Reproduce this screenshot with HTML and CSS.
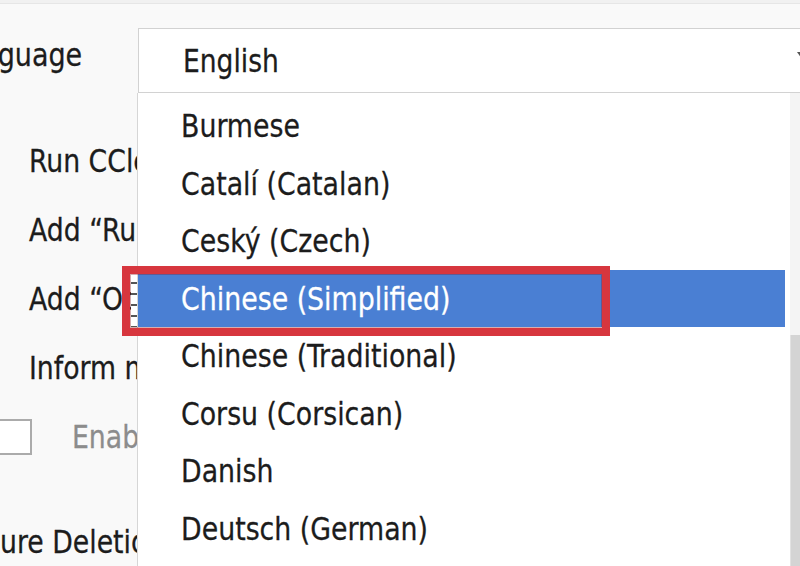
FILE: index.html
```html
<!DOCTYPE html>
<html lang="en">
<head>
<meta charset="utf-8">
<title>Settings - Language</title>
<link rel="stylesheet" href="styles.css">
</head>
<body>
<div class="dialog">
  <div class="topbar"></div>
  <div class="lang-row">
    <span class="lang-label"><span class="tx">Language</span></span>
    <div class="select">
      <span class="tx">English</span>
      <span class="arrow"></span>
    </div>
  </div>
  <div class="options">
    <div class="opt"><span class="tx">Run CCleaner when the computer starts</span></div>
    <div class="opt"><span class="tx">Add “Run CCleaner” option to Recycle Bin context menu</span></div>
    <div class="opt"><span class="tx">Add “Open CCleaner...” option to Recycle Bin context menu</span></div>
    <div class="opt"><span class="tx">Inform me of updates to CCleaner</span></div>
    <div class="opt check-row"><span class="checkbox"></span><span class="tx disabled">Enable automatic updates for CCleaner</span></div>
  </div>
  <div class="section"><span class="tx">Secure Deletion</span></div>

  <ul class="dropdown">
    <li><span class="tx">Burmese</span></li>
    <li><span class="tx">Catalí (Catalan)</span></li>
    <li><span class="tx">Ceský (Czech)</span></li>
    <li class="sel"><span class="tx">Chinese (Simplified)</span></li>
    <li><span class="tx">Chinese (Traditional)</span></li>
    <li><span class="tx">Corsu (Corsican)</span></li>
    <li><span class="tx">Danish</span></li>
    <li><span class="tx">Deutsch (German)</span></li>
  </ul>
  <div class="scrollbar"><div class="thumb"></div></div>
  <div class="callout"></div>
</div>
</body>
</html>
```
FILE: styles.css
```css
html, body {
  margin: 0;
  padding: 0;
  background: #f9f9f9;
}

.dialog {
  position: relative;
  width: 800px;
  height: 566px;
  overflow: hidden;
  white-space: nowrap;
  background: #f9f9f9;
  color: #1c1c1c;
  font-family: "DejaVu Sans Condensed", "DejaVu Sans", sans-serif;
  -webkit-text-stroke: 0.25px currentColor;
}

.tx {
  display: inline-block;
  transform: scaleY(1.09);
}

.topbar {
  height: 3px;
  background: #f1f1f1;
  border-bottom: 1px solid #e6e6e6;
}

.lang-row {
  display: flex;
  align-items: center;
  height: 65px;
  margin-top: 24px;
}

.lang-label {
  flex: none;
  width: 189px;
  margin-left: -51px;
  margin-bottom: 12px;
  font-size: 30px;
}

.select {
  position: relative;
  flex: none;
  box-sizing: border-box;
  width: 720px;
  height: 65px;
  display: flex;
  align-items: center;
  padding-left: 44px;
  background: #ffffff;
  border: 1px solid #d2d2d2;
  font-size: 29.5px;
}

.arrow {
  position: absolute;
  left: 658px;
  top: 23px;
  width: 0;
  height: 0;
  border-left: 5px solid transparent;
  border-right: 5px solid transparent;
  border-top: 7px solid #555;
}

.options {
  margin-top: 33px;
}

.opt {
  display: flex;
  align-items: center;
  height: 69px;
  padding-left: 29px;
  font-size: 29.7px;
}

.check-row {
  padding-left: 0;
  margin-left: -4px;
}

.checkbox {
  flex: none;
  box-sizing: border-box;
  width: 36px;
  height: 36px;
  background: #ffffff;
  border: 2px solid #ababab;
  margin-right: 40px;
}

.disabled {
  color: #8c8c8c;
}

.section {
  display: flex;
  align-items: center;
  height: 40px;
  margin-top: 50px;
  margin-left: -48px;
  font-size: 29.7px;
}

.dropdown {
  position: absolute;
  left: 137px;
  top: 93px;
  width: 653px;
  bottom: -20px;
  box-sizing: border-box;
  margin: 0;
  padding: 4px 0 0 0;
  list-style: none;
  background: #ffffff;
  border-left: 1px solid #d6d6d6;
}

.dropdown li {
  position: relative;
  height: 57.5px;
  display: flex;
  align-items: center;
  padding-left: 43px;
  font-size: 29.8px;
}

.dropdown li.sel {
  margin-right: 5px;
  background: #4a7fd3;
  color: #ffffff;
}

.dropdown li.sel::before {
  content: "";
  position: absolute;
  left: -7px;
  top: 3px;
  bottom: 0;
  width: 6px;
  background: repeating-linear-gradient(#ffffff 0 9px, #555555 9px 11px);
}

.scrollbar {
  position: absolute;
  left: 790px;
  top: 93px;
  bottom: 0;
  width: 10px;
  background: #f4f4f4;
}

.thumb {
  margin-top: 242px;
  height: 300px;
  background: #d4d4d4;
  border-left: 1px solid #e2e2e2;
}

.callout {
  position: absolute;
  left: 122px;
  top: 266px;
  width: 488px;
  height: 70px;
  box-sizing: border-box;
  border: 8px solid #d7363e;
  box-shadow: inset 0 0 0 1px rgba(140, 20, 25, 0.35);
}
```
